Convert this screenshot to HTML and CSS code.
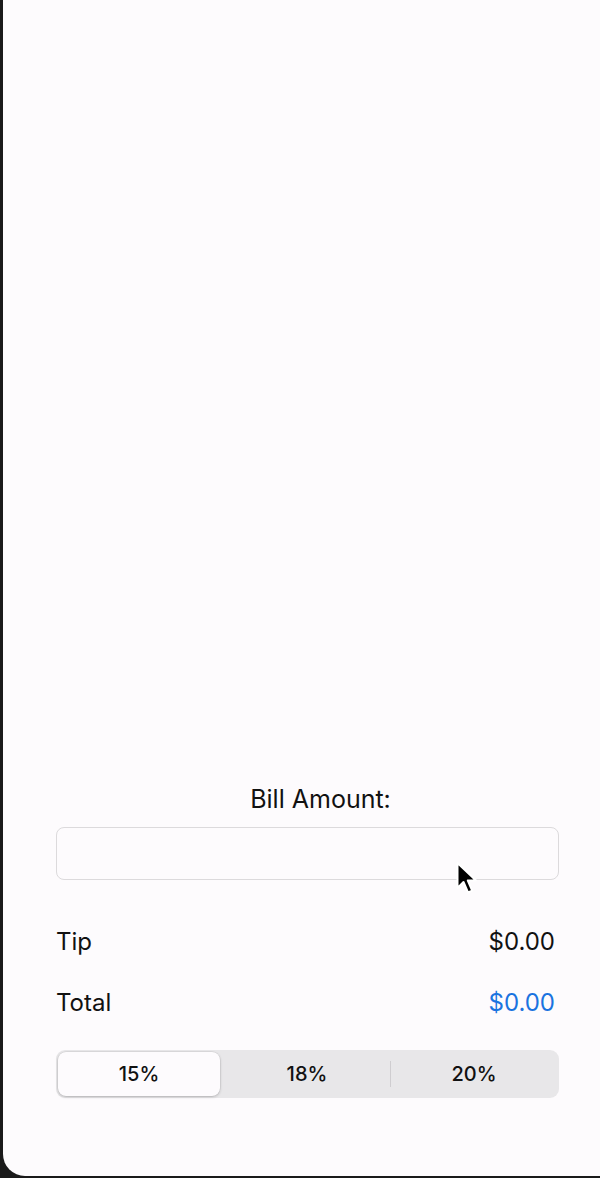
FILE: index.html
```html
<!DOCTYPE html>
<html>
<head>
<meta charset="utf-8">
<link rel="stylesheet" href="styles.css">
</head>
<body>
<div class="screen">
  <div class="content">
    <div class="label">Bill Amount:</div>
    <div class="input"></div>
    <div class="row tip"><span>Tip</span><span>$0.00</span></div>
    <div class="row total"><span>Total</span><span class="blue">$0.00</span></div>
    <div class="seg">
      <div class="opt sel">15%</div>
      <div class="opt">18%</div>
      <div class="div"></div>
      <div class="opt">20%</div>
    </div>
  </div>
  <svg class="cursor" width="24" height="36" viewBox="0 0 24 36">
    <path d="M2.5 2 L2.5 27 L8.5 21 L13 31.5 L17.2 29.6 L12.8 19.5 L21 19.5 Z" fill="#000" stroke="#fff" stroke-width="2" stroke-linejoin="round"/>
  </svg>
</div>
</body>
</html>
```
FILE: styles.css
```css
html, body { margin: 0; padding: 0; }
body {
  background: #1a1a1a;
  width: 600px;
  height: 1178px;
  overflow: hidden;
  font-family: Inter, "Liberation Sans", sans-serif;
}
.screen {
  position: relative;
  margin-left: 3px;
  width: 597px;
  height: 1176px;
  background: #fdfbfd;
  border-bottom-left-radius: 22px;
  display: flex;
  flex-direction: column;
  justify-content: flex-end;
}
.content {
  padding: 0 41px 78px 53px;
  display: flex;
  flex-direction: column;
}
.label {
  text-align: center;
  font-size: 25px;
  color: #111;
  margin-left: 26px;
  line-height: 30px;
}
.input {
  margin-top: 13px;
  height: 51px;
  border: 1px solid #dcdadc;
  border-radius: 8px;
  background: #fdfbfd;
}
.row {
  display: flex;
  justify-content: space-between;
  font-size: 24px;
  color: #111;
  line-height: 30px;
  padding-right: 4px;
}
.tip { margin-top: 47px; }
.total { margin-top: 31px; }
.blue { color: #1a73e0; }
.seg {
  margin-top: 32px;
  height: 48px;
  border-radius: 9px;
  background: #e8e7e9;
  display: flex;
  align-items: center;
  padding: 0 2px;
  box-sizing: border-box;
}
.opt {
  flex: 1;
  height: 44px;
  display: flex;
  align-items: center;
  justify-content: center;
  font-size: 20px;
  font-weight: 500;
  color: #111;
}
.opt.sel {
  background: #fdfbfd;
  border-radius: 8px;
  box-shadow: 0 1px 3px rgba(0,0,0,0.2), 0 0 0 0.5px rgba(0,0,0,0.08);
  flex: 0 0 162px;
  margin-right: 4px;
}
.div {
  width: 1px;
  height: 26px;
  background: #cfcdd0;
}
.cursor {
  position: absolute;
  left: 452px;
  top: 861px;
}
```
